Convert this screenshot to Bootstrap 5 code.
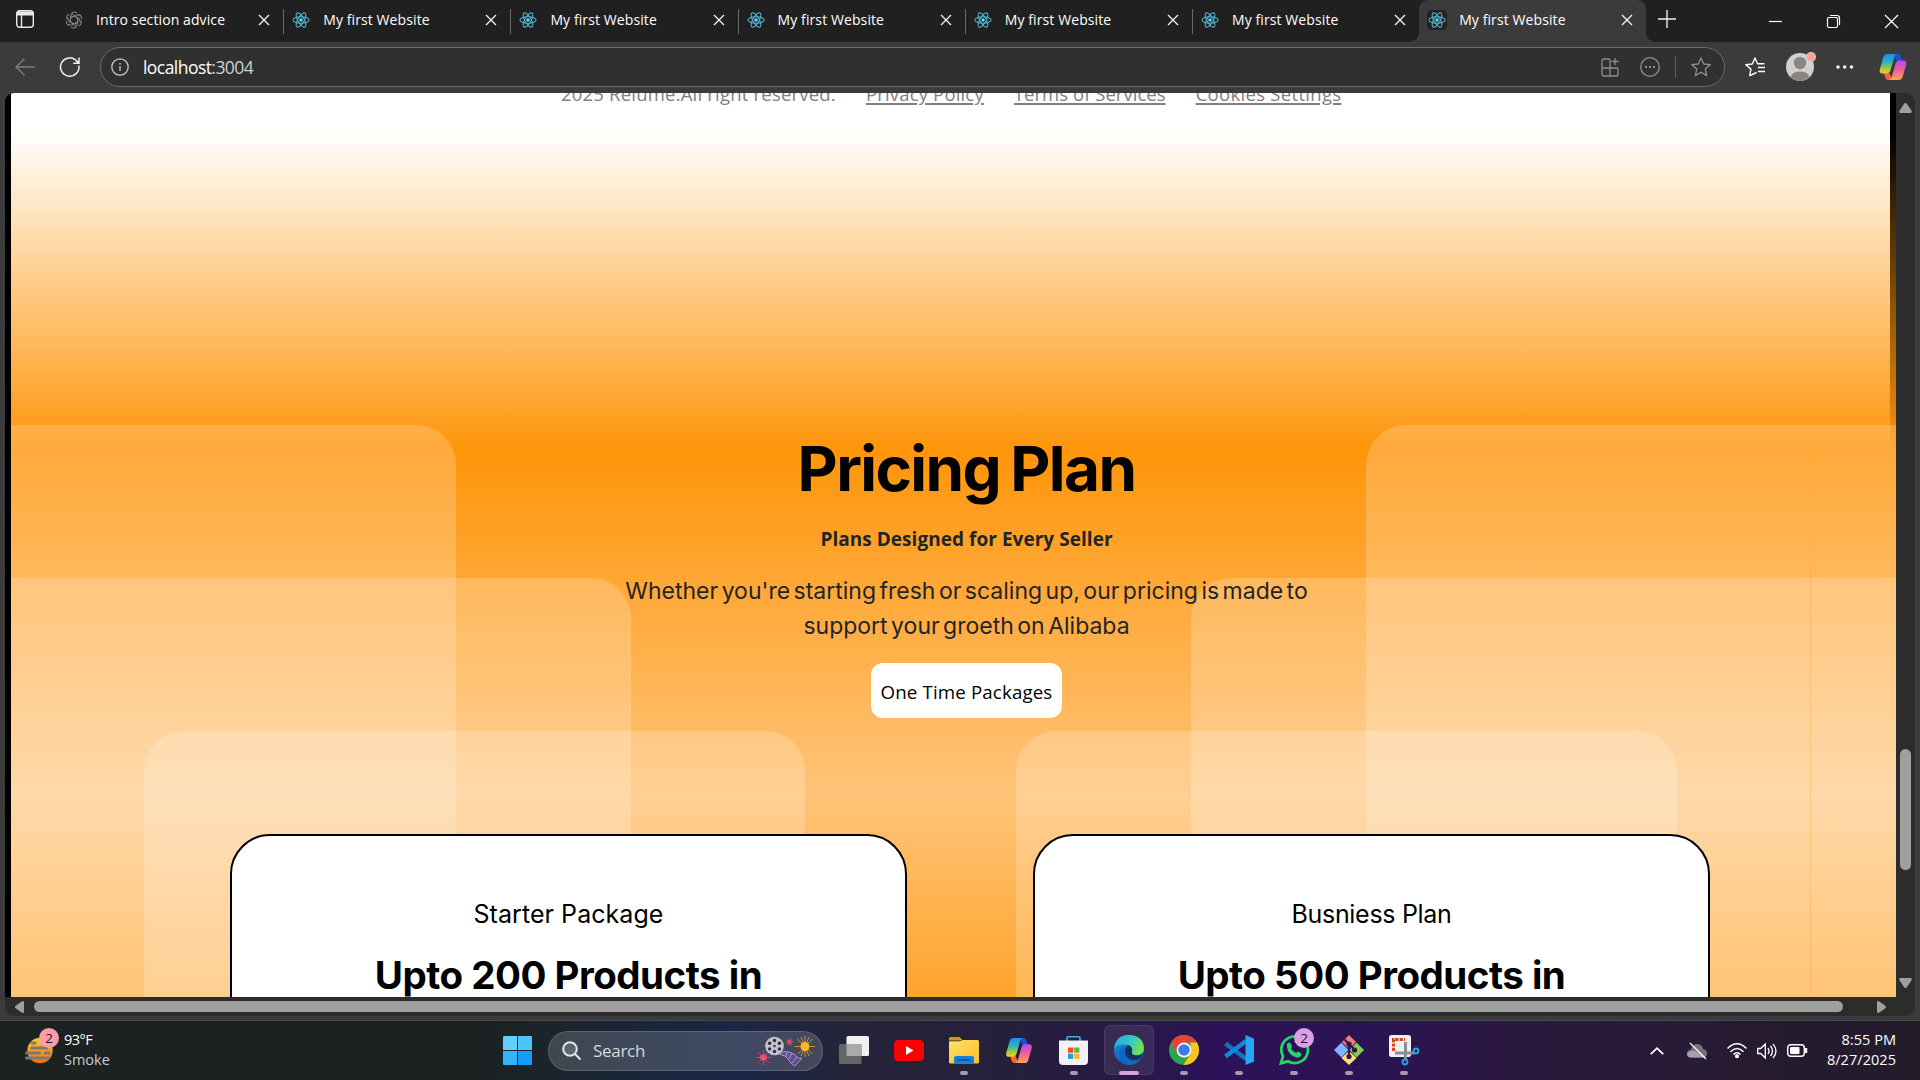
<!DOCTYPE html>
<html lang="en">
<head>
<meta charset="utf-8">
<title>My first Website</title>
<link href="https://cdn.jsdelivr.net/npm/bootstrap@5.3.0/dist/css/bootstrap.min.css" rel="stylesheet">
<style>
  body { width: 1920px; height: 1080px; overflow: hidden; font-family: "Open Sans", "Noto Sans", sans-serif; background: #3b3b3b; }
  svg { display: block; flex: none; overflow: visible; }

  /* tab strip */
  .tabstrip { height: 42px; background: #202020; color: #fff; }
  .tab-tools { width: 56px; padding-left: 16px; }
  .tab { width: 227.2px; padding-left: 9px; padding-right: 13px; font-size: 14px; letter-spacing: .1px; position: relative; height: 42px; padding-bottom: 3px; white-space: nowrap; }
  .tab + .tab::before, .tab:first-of-type::before { content: ""; position: absolute; left: 0; top: 9px; height: 25px; border-left: 1px solid #6a6a6a; }
  .tab .ttl { margin-left: 13px; }
  .tab.active { background: #3b3b3b; border-radius: 9px 9px 0 0; }
  .tab.active::before { display: none; }
  .tab.active::after { content: ""; position: absolute; left: -9px; right: -9px; bottom: 0; height: 9px;
    background: radial-gradient(circle at 0 0, transparent 8.5px, #3b3b3b 9px) left/9px 9px no-repeat, radial-gradient(circle at 100% 0, transparent 8.5px, #3b3b3b 9px) right/9px 9px no-repeat; }
  .fav { width: 18px; height: 18px; border-radius: 3px; }
  .active .fav { background: #222; outline: 1px solid #222; }
  .newtab { margin-left: 12px; }
  .caption-btns { gap: 45px; padding-right: 22px; padding-top: 1px; }

  /* toolbar */
  .toolbar { height: 51px; background: #3b3b3b; padding-left: 15px; padding-right: 13px; padding-bottom: 1px; }
  .omnibox { width: 1625px; height: 40px; border: 1px solid #6b6b6b; border-radius: 20px; background: #303030; margin-left: 20px; padding: 0 13px 0 10px; font-size: 17.5px; }
  .omnibox .url { margin-left: 14px; color: #fff; letter-spacing: -.55px; }
  .omnibox .url span { color: #cfcfcf; }
  .divider { width: 1px; height: 22px; background: #5d5d5d; }

  /* viewport and scrollbars */
  .viewport { height: 928px; padding: 0 5px 5px; border-bottom: 1px solid #464646; }
  .viewbox { width: 1910px; border-radius: 9px; overflow: hidden; background: #2c2c2c; }
  .page { width: 1891px; height: 904px; background: #000; padding-left: 6px; overflow: hidden; }
  .canvas { position: relative; width: 1885px; height: 904px; overflow: hidden; }
  .backdrop { position: absolute; inset: 0; background: linear-gradient(rgba(255,149,10,0) 37px, rgb(255,149,10) 356px, #ffc479 702px, #ffa42b 904px); }
  .whitebase { position: absolute; left: 0; top: 0; bottom: 0; width: 1879px; background: #fff; }
  .pane { position: absolute; width: 661px; height: 700px; border-radius: 40px; background: rgba(255,255,255,.2); }
  .seam { position: absolute; left: 1799px; top: 332px; bottom: 0; width: 1px; background: rgba(255,160,50,.3); }
  .content { position: relative; width: 1911px; margin-top: -14px; }
  .legal { height: 30px; line-height: 30px; padding-left: 550px; gap: 30px; font-size: 18.5px; color: #808080; white-space: nowrap; }
  .legal a { color: inherit; text-underline-offset: 2px; text-decoration-thickness: 1.5px; }
  .l1 { letter-spacing: .2px; }
  .l2 { letter-spacing: .17px; }
  .l3 { letter-spacing: .04px; }
  .l4 { letter-spacing: .3px; }
  .plan-title { font: 700 62px/74px Inter, sans-serif; color: #000; letter-spacing: -1.6px; word-spacing: -3px; margin: 323px 0 19px; }
  .plan-sub { font-weight: 700; font-size: 19px; line-height: 28px; margin: 0 0 21px; letter-spacing: .04px; }
  .plan-text { font: 400 23px/35px Inter, sans-serif; margin: 0 0 19px; letter-spacing: 0; word-spacing: -3px; color: #212529; }
  .plan-btn { width: 191px; height: 55px; border-radius: 12px; background: #fff; color: #000; font-size: 18.7px; padding: 4px 0 0; border: 0; letter-spacing: .15px; }
  .plans { margin: 116px 0 0 219px; gap: 126px; }
  .plan { width: 677px; height: 500px; border: 2px solid #000; border-radius: 40px; background: #fff; color: #000; padding-top: 59px; text-align: center; font-family: Inter, sans-serif; }
  .plan h3 { font-size: 25px; line-height: 38px; font-weight: 400; margin: 0 0 19px; letter-spacing: .06px; }
  .plan + .plan h3 { letter-spacing: -.3px; }
  .plan h2 { font-size: 38.5px; line-height: 46px; font-weight: 700; margin: 0; letter-spacing: -.5px; }
  .vbar { width: 19px; height: 904px; padding: 10px 0 9px; }
  .vthumb { width: 11px; height: 121px; border-radius: 6px; background: #9f9f9f; margin-top: 636px; }
  .hbar { height: 19px; padding: 0 0 0 10px; }
  .hthumb { width: 1809px; height: 11px; border-radius: 6px; background: #9f9f9f; margin-left: 10px; margin-right: 34px; }

  /* taskbar */
  .taskbar { height: 59px; color: #fff; font-size: 14.5px; line-height: 20px;
    background: linear-gradient(90deg, #1c2222 0, #1c2222 480px, #1a2634 600px, #1b2747 740px, #252439 850px, #26203a 980px, #271b43 1110px, #2c1259 1220px, #2b1451 1400px, #2b183d 1520px, #281b34 1700px, #221c2b 1920px); }
  .weather { width: 490px; padding-left: 25px; letter-spacing: -.5px; }
  .temps { margin: -2px 0 0 10px; }
  .temps span { color: #c8cccc; letter-spacing: 0; }
  .searchbox { width: 275px; height: 40px; border-radius: 20px; background: rgba(255,255,255,.16); border: 1px solid rgba(255,255,255,.14); margin: 0 3px; padding: 0 7px 0 13px; font-size: 17px; color: #d5d9dc; letter-spacing: -.3px; }
  .app { width: 55px; height: 59px; position: relative; padding-bottom: 1px; }
  .app.run::after { content: ""; position: absolute; left: 50%; bottom: 5px; width: 8px; height: 4px; margin-left: -4px; border-radius: 2px; background: #a49bb2; }
  .app.on::before { content: ""; position: absolute; inset: 4px 2px 5px 3px; border-radius: 6px; background: rgba(255,255,255,.08); border: 1px solid rgba(255,255,255,.08); }
  .app.on::after { width: 20px; margin-left: -10px; background: #dca0e2; }
  .app svg { position: relative; }
  .count { position: absolute; width: 20px; height: 20px; border-radius: 50%; color: #2a1035; font-size: 13.5px; line-height: 20px; text-align: center; letter-spacing: 0; }
  .count-weather { left: 39px; top: -4px; background: #ff9aa8; }
  .count-chat { left: 28px; top: 7px; background: #dc9fe2; }
  .tray { padding-right: 24px; }
  .clock { text-align: right; letter-spacing: .05px; width: 75px; margin: -2px 0 0 13px; white-space: nowrap; }
</style>
<script src="https://cdn.jsdelivr.net/npm/bootstrap@5.3.0/dist/js/bootstrap.bundle.min.js"></script>
</head>
<body>
<svg width="0" height="0" class="position-absolute">
  <defs>
    <linearGradient id="cA" x1="0" y1="0" x2="0" y2="1"><stop offset="0" stop-color="#1b8ef2"/><stop offset=".4" stop-color="#2ab0c0"/><stop offset=".75" stop-color="#a5cc3c"/><stop offset="1" stop-color="#ffcb22"/></linearGradient>
    <linearGradient id="cB" x1="0" y1="0" x2="0" y2="1"><stop offset="0" stop-color="#b04df0"/><stop offset=".45" stop-color="#ec5aa0"/><stop offset="1" stop-color="#ffa450"/></linearGradient>
    <linearGradient id="fold" x1="0" y1="0" x2="1" y2="1"><stop offset="0" stop-color="#ffdf6b"/><stop offset="1" stop-color="#fdbf2c"/></linearGradient>
    <linearGradient id="eG" x1="0" y1="0" x2="1" y2=".3"><stop offset="0" stop-color="#2aa4e8"/><stop offset=".6" stop-color="#34c7c7"/><stop offset="1" stop-color="#74e04c"/></linearGradient>
    <linearGradient id="eB" x1="0" y1="0" x2=".6" y2="1"><stop offset="0" stop-color="#1d9be0"/><stop offset="1" stop-color="#0c4fa5"/></linearGradient>
    <linearGradient id="sun" x1="0" y1="0" x2="0" y2="1"><stop offset="0" stop-color="#ffc928"/><stop offset="1" stop-color="#f07018"/></linearGradient>
    <symbol id="react" viewBox="0 0 20 20"><g fill="none" stroke="#53b9d4" stroke-width="1.15"><ellipse cx="10" cy="10" rx="9" ry="3.5"/><ellipse cx="10" cy="10" rx="9" ry="3.5" transform="rotate(60 10 10)"/><ellipse cx="10" cy="10" rx="9" ry="3.5" transform="rotate(120 10 10)"/></g><circle cx="10" cy="10" r="1.9" fill="#61dafb"/></symbol>
    <symbol id="copilot" viewBox="0 0 28 28"><path d="M14 1h5q2 0 2.600 2l1.800 5.500h-5.500z" fill="#1c50d6"/><path d="M14 27H9q-2 0-2.600-2l-1.800-5.500h5.500z" fill="#f4643c"/><path d="M8.500 1H18q-2 .5-2.700 3L11.500 17q-1 3.500-4 3.500H3.500Q0 20.500 .8 16.500L4.400 4Q5.300 1 8.500 1z" fill="url(#cA)"/><path d="M19.500 27H10q2-.5 2.700-3L16.500 11q1-3.500 4-3.500h4q3.500 0 2.700 4L23.600 24q-.9 3-4.100 3z" fill="url(#cB)"/></symbol>
    <symbol id="xmark" viewBox="0 0 12 12"><path d="M1 1l10 10M11 1L1 11" stroke="#f2f2f2" stroke-width="1.3"/></symbol>
  </defs>
</svg>

<header class="tabstrip d-flex align-items-center">
  <div class="tab-tools pb-1"><svg width="18" height="18" viewBox="0 0 18 18" fill="none" stroke="#e8e8e8" stroke-width="1.4"><rect x=".7" y=".7" width="16.600" height="16.600" rx="3"/><path d="M1 2.800h16M1 4.200h16" stroke-width="2.500"/><path d="M5.500 5v12"/></svg></div>
  <div class="tab d-flex align-items-center"><svg class="fav" viewBox="0 0 20 20" fill="none" stroke="#858585" stroke-width="1.200"><g id="petal"><path d="M10 5.500L14 7.800V13q0 3-3 4.300"/><path d="M7 2.700Q10-.3 13.300 2.200"/></g><use href="#petal" transform="rotate(60 10 10)"/><use href="#petal" transform="rotate(120 10 10)"/><use href="#petal" transform="rotate(180 10 10)"/><use href="#petal" transform="rotate(240 10 10)"/><use href="#petal" transform="rotate(300 10 10)"/></svg><span class="ttl">Intro section advice</span><svg class="ms-auto" width="12" height="12"><use href="#xmark"/></svg></div>
  <div class="tab d-flex align-items-center"><svg class="fav"><use href="#react"/></svg><span class="ttl">My first Website</span><svg class="ms-auto" width="12" height="12"><use href="#xmark"/></svg></div>
  <div class="tab d-flex align-items-center"><svg class="fav"><use href="#react"/></svg><span class="ttl">My first Website</span><svg class="ms-auto" width="12" height="12"><use href="#xmark"/></svg></div>
  <div class="tab d-flex align-items-center"><svg class="fav"><use href="#react"/></svg><span class="ttl">My first Website</span><svg class="ms-auto" width="12" height="12"><use href="#xmark"/></svg></div>
  <div class="tab d-flex align-items-center"><svg class="fav"><use href="#react"/></svg><span class="ttl">My first Website</span><svg class="ms-auto" width="12" height="12"><use href="#xmark"/></svg></div>
  <div class="tab d-flex align-items-center"><svg class="fav"><use href="#react"/></svg><span class="ttl">My first Website</span><svg class="ms-auto" width="12" height="12"><use href="#xmark"/></svg></div>
  <div class="tab active d-flex align-items-center"><svg class="fav"><use href="#react"/></svg><span class="ttl">My first Website</span><svg class="ms-auto" width="12" height="12"><use href="#xmark"/></svg></div>
  <svg class="newtab mb-1" width="18" height="18" viewBox="0 0 18 18" stroke="#eee" stroke-width="1.400"><path d="M9 0v18M0 9h18"/></svg>
  <div class="caption-btns d-flex align-items-center ms-auto">
    <svg width="13" height="13" stroke="#fff" stroke-width="1.200"><path d="M0 6.500h13"/></svg>
    <svg width="13" height="13" fill="none" stroke="#fff" stroke-width="1.200"><rect x=".5" y="2.500" width="10" height="10" rx="1.500"/><path d="M3 .5h7q2.500 0 2.500 2.500v7"/></svg>
    <svg width="13" height="13" stroke="#fff" stroke-width="1.200"><path d="M0 0l13 13M13 0L0 13"/></svg>
  </div>
</header>

<nav class="toolbar d-flex align-items-center">
  <svg width="20" height="18" viewBox="0 0 20 18" fill="none" stroke="#7d7d7d" stroke-width="1.400"><path d="M20 9H1M9.500 .8L1 9l8.500 8.200"/></svg>
  <svg style="margin-left:25px" width="20" height="20" viewBox="0 0 20 20" fill="none" stroke="#f0f0f0" stroke-width="1.500"><path d="M18.800 8.500A9.200 9.200 0 1 1 15.500 2.900l3 3M19 .5V6.200H13.200"/></svg>
  <div class="omnibox d-flex align-items-center">
    <svg width="18" height="18" viewBox="0 0 18 18" fill="none" stroke="#c9c9c9" stroke-width="1.300"><circle cx="9" cy="9" r="8.200"/><path d="M9 8v5M9 5v1.500"/></svg>
    <span class="url">localhost<span>:3004</span></span>
    <div class="ms-auto d-flex align-items-center" style="gap:15px">
      <svg style="margin-right:6px" width="18" height="19" viewBox="0 0 18 19" fill="none" stroke="#8f8f8f" stroke-width="1.300"><path d="M8 1H3Q1 1 1 3v13q0 2 2 2h12q2 0 2-2v-5q0-1-1-1H1M9 18V2Q9 1 8 1M14 0v7M10.500 3.500h7"/></svg>
      <svg width="20" height="20" viewBox="0 0 20 20" fill="none" stroke="#8f8f8f" stroke-width="1.300"><circle cx="10" cy="10" r="9.300"/><path d="M5 10h2M9 10h2M13 10h2" stroke-width="2"/></svg>
      <span class="divider"></span>
      <svg width="20" height="20" viewBox="0 0 20 20" fill="none" stroke="#8f8f8f" stroke-width="1.300" stroke-linejoin="round"><path d="M10 1l2.700 6 6.500.7-4.900 4.400 1.400 6.500L10 15.300l-5.700 3.300 1.400-6.500L.8 7.700 7.300 7z"/></svg>
    </div>
  </div>
  <svg style="margin-left:20px" width="20" height="20" viewBox="0 0 20 20" fill="none" stroke="#fff" stroke-width="1.400" stroke-linejoin="round"><path d="M11.500 15.500L4.800 18.600l1.100-6.500L.8 7.700 7.300 7 10 1l2.500 5.800h7M13 10.500h7M13 14.500h7"/></svg>
  <svg style="margin-left:21px" width="30" height="30" viewBox="0 0 30 30"><circle cx="14" cy="15" r="14" fill="#d2d0cc"/><circle cx="14" cy="11" r="6.200" fill="#8a8782"/><path d="M4.500 25Q6 19.500 14 19.500T23.500 25Q19 29 14 29T4.500 25z" fill="#8a8782"/><circle cx="25" cy="5" r="5" fill="#d2d0cc"/><circle cx="25" cy="5" r="4" fill="#ff9f9a"/></svg>
  <svg style="margin-left:20px" width="18" height="4" fill="#f2f2f2"><circle cx="2" cy="2" r="1.800"/><circle cx="8.700" cy="2" r="1.800"/><circle cx="15.500" cy="2" r="1.800"/></svg>
  <svg class="ms-auto" width="28" height="28"><use href="#copilot"/></svg>
</nav>

<main class="viewport">
  <div class="viewbox">
    <div class="d-flex">
      <div class="page">
        <div class="canvas">
          <div class="whitebase"></div>
          <div class="backdrop"></div>
          <div class="pane" style="left:-216px;top:332px"></div>
          <div class="pane" style="left:-41px;top:485px"></div>
          <div class="pane" style="left:133px;top:638px"></div>
          <div class="pane" style="left:1355px;top:332px"></div>
          <div class="pane" style="left:1180px;top:485px;width:900px"></div>
          <div class="pane" style="left:1005px;top:638px"></div>
          <div class="seam"></div>
          <div class="content">
            <div class="legal d-flex"><span class="l1">2025 Relume.All right reserved.</span><a class="l2" href="#">Privacy Policy</a><a class="l3" href="#">Terms of Services</a><a class="l4" href="#">Cookies Settings</a></div>
            <section class="text-center">
              <h1 class="plan-title">Pricing Plan</h1>
              <p class="plan-sub">Plans Designed for Every Seller</p>
              <p class="plan-text">Whether you're starting fresh or scaling up, our pricing is made to<br>support your groeth on Alibaba</p>
              <button class="plan-btn d-block mx-auto">One Time Packages</button>
            </section>
            <section class="plans d-flex">
              <article class="plan"><h3>Starter Package</h3><h2>Upto 200 Products in</h2></article>
              <article class="plan"><h3>Busniess Plan</h3><h2>Upto 500 Products in</h2></article>
            </section>
          </div>
        </div>
      </div>
      <div class="vbar d-flex flex-column align-items-center">
        <svg width="13" height="10" fill="#9f9f9f"><path d="M6.500 0Q7.500 0 8 1l4.700 7q.5 2-1 2H1.300q-1.500 0-1-2L5 1q.5-1 1.500-1z"/></svg>
        <div class="vthumb"></div>
        <svg class="mt-auto" width="13" height="10" fill="#9f9f9f"><path d="M6.500 10Q7.500 10 8 9l4.700-7q.5-2-1-2H1.300Q-.2 0 .3 2L5 9q.5 1 1.500 1z"/></svg>
      </div>
    </div>
    <div class="hbar d-flex align-items-center">
      <svg width="9" height="12" fill="#9f9f9f"><path d="M0 6Q0 5 1 4.500L7 .3Q9-.5 9 1.300v9.400q0 1.800-2 1L1 7.500Q0 7 0 6z"/></svg>
      <div class="hthumb"></div>
      <svg width="9" height="12" fill="#9f9f9f"><path d="M9 6Q9 5 8 4.500L2 .3Q0-.5 0 1.300v9.400q0 1.800 2 1L8 7.500Q9 7 9 6z"/></svg>
    </div>
  </div>
</main>

<footer class="taskbar d-flex align-items-center">
  <div class="weather d-flex align-items-center position-relative">
    <svg width="29" height="29" viewBox="0 0 29 29"><circle cx="15" cy="14.500" r="12.700" fill="url(#sun)"/><path d="M7 7h3M7 12h15M1.500 17h13M20 17h4M1.500 22h22" stroke="#7b7974" stroke-width="3" stroke-linecap="round"/></svg>
    <span class="count count-weather">2</span>
    <div class="temps">93°F<br><span>Smoke</span></div>
  </div>
  <div class="app d-flex align-items-center justify-content-center"><svg width="29" height="29"><path fill="#62d0fb" d="M1 0h13v14H0V1q0-1 1-1z"/><path fill="#4cc6fa" d="M15 0h13q1 0 1 1v13H15z"/><path fill="#35b5f8" d="M0 15h14v14H1q-1 0-1-1z"/><path fill="#149cf6" d="M15 15h14v13q0 1-1 1H15z"/></svg></div>
  <div class="searchbox d-flex align-items-center">
    <svg width="19" height="19" fill="none" stroke="#e4e4e4" stroke-width="2"><circle cx="8" cy="8" r="6.800" fill="#5a666c"/><path d="M13 13l5 5" stroke-linecap="round"/></svg>
    <span style="margin-left:12px">Search</span>
    <svg class="ms-auto" width="59" height="30" viewBox="0 0 59 30"><g stroke="#f0405f" stroke-width=".8"><path d="M7.500 14v15M0 21.500h15M2 16l11 11M13 16L2 27M33.500 2v8M29.500 6h8M31 3l5 6M36 3l-5 6"/></g><circle cx="7.500" cy="21.500" r="3.300" fill="#f0506c"/><circle cx="33.500" cy="6" r="2.300" fill="#f0405f"/><g stroke="#e8a52c" stroke-width=".8"><path d="M49 0v21M38.500 10.500H59M41.500 3l15 15M56.500 3l-15 15M45 1l8 19M53 1l-8 19"/></g><circle cx="49" cy="10.500" r="4.500" fill="#f8b92c"/><path d="M23 18q4-4 10-2 7 2 8 5 2 2 5 1l-7 8q-4-1-6-6-3-5-10-6z" fill="#5f4f8c" stroke="#a793d4"/><path d="M31 16l-1 5M36 17l-3 6M41 21l-5 6" stroke="#a793d4"/><circle cx="18.500" cy="10" r="9.300" fill="#c6c1ce"/><g fill="#2f2b3c"><circle cx="18.500" cy="4.500" r="1.700"/><circle cx="18.500" cy="15.500" r="1.700"/><circle cx="13.600" cy="7.300" r="1.700"/><circle cx="23.400" cy="7.300" r="1.700"/><circle cx="13.600" cy="12.900" r="1.700"/><circle cx="23.400" cy="12.900" r="1.700"/><circle cx="18.500" cy="10" r="1.200"/></g></svg>
  </div>
  <div class="app d-flex align-items-center justify-content-center"><svg width="30" height="28"><rect x="7.500" width="22.500" height="20" rx="1.500" fill="#f0f0f0"/><rect y="8" width="22.500" height="20" rx="1.500" fill="#666"/><path d="M7.500 8h15v12h-15z" fill="#aaa"/></svg></div>
  <div class="app d-flex align-items-center justify-content-center"><svg width="30" height="21"><rect width="30" height="21" rx="4.500" fill="#f00"/><path d="M12 6l7.500 4.500L12 15z" fill="#fff"/></svg></div>
  <div class="app run d-flex align-items-center justify-content-center"><svg width="30" height="27"><path d="M0 1.500Q0 0 1.500 0h9L14 3.500H0z" fill="#d59a14"/><path d="M0 5q0-.8 1-.8h10L14 3h14.500Q30 3 30 4.500V25q0 1.500-1.500 1.500h-27Q0 26.500 0 25z" fill="url(#fold)"/><path d="M5 26.500V21q0-2 2-2h16q2 0 2 2v5.500z" fill="#1480d8"/><path d="M8.500 23h13" stroke="#0b4f94" stroke-width="1.500"/></svg></div>
  <div class="app d-flex align-items-center justify-content-center"><svg width="28" height="27"><use href="#copilot"/></svg></div>
  <div class="app run d-flex align-items-center justify-content-center"><svg width="29" height="29"><path d="M8 5V2q0-1.300 1.300-1.300h10.400Q21 .7 21 2v3" fill="none" stroke="#32b3f2" stroke-width="1.600"/><path d="M0 4.500h29V25q0 4-4 4H4q-4 0-4-4z" fill="#f2f2f4"/><path d="M9 11.500h5.200v5.200H9z" fill="#f1511b"/><path d="M15.200 11.500h5.200v5.200h-5.200z" fill="#65b32e"/><path d="M9 17.700h5.200v5.200H9z" fill="#1aa0ee"/><path d="M15.200 17.700h5.200v5.200h-5.200z" fill="#fbb918"/></svg></div>
  <div class="app run on d-flex align-items-center justify-content-center"><svg width="30" height="30" viewBox="0 0 30 30"><circle cx="15" cy="15" r="15" fill="url(#eB)"/><path d="M0 13Q2 0 15 0 29 .5 30 13q0 7-7 7.500-6 0-5-4 1-6-6-7Q4 9 0 13z" fill="url(#eG)"/><path d="M18 16.500q-1 4 5 4 3.500 0 5.500-2.500Q27 25 19.500 25 11 24 11 16q0-4 3.500-5.800 4.500 1.800 3.500 6.300z" fill="#15305e"/><path d="M11 14q-3 11 8.500 12 4 0 7-2-4 6-11.500 6Q5 28 5 19q.5-6 6-7z" fill="#1068c0"/></svg></div>
  <div class="app run d-flex align-items-center justify-content-center"><svg width="30" height="30" viewBox="0 0 30 30"><circle cx="15" cy="15" r="15" fill="#2fa24c"/><path d="M15 15L2 7.500A15 15 0 0 1 28 7.500H15z" fill="#ea4335"/><path d="M28 7.500A15 15 0 0 1 14.500 30L21.500 18.500 21.500 7.500z" fill="#fcc31e"/><path d="M2 7.500L9 19 15 7.500z" fill="#ea4335"/><circle cx="15" cy="15" r="7.400" fill="#fff"/><circle cx="15" cy="15" r="5.800" fill="#3b7ded"/></svg></div>
  <div class="app run d-flex align-items-center justify-content-center"><svg width="30" height="30" viewBox="0 0 30 30"><path d="M1.500 8.500L22 24" stroke="#0f74c4" stroke-width="4.500"/><path d="M1.500 21.500L22 6" stroke="#1587d8" stroke-width="4.500"/><path d="M21.500 0L30 3.500v23L21.500 30z" fill="#27a5f2"/></svg></div>
  <div class="app run d-flex align-items-center justify-content-center"><svg width="30" height="30" viewBox="0 0 30 30"><path d="M2 28.200l2-7A13.300 13.300 0 1 1 9 26.300z" fill="none" stroke="#25d366" stroke-width="2.800"/><path d="M8 9q2-3 4 0l1 2.500q0 1-1 2 2 3.500 5 4.500l2-1.500q3 1 3.500 2.500-.5 4-5 3.500Q9 20 8 12z" fill="#25d366"/></svg><span class="count count-chat">2</span></div>
  <div class="app run d-flex align-items-center justify-content-center"><svg width="30" height="30" viewBox="0 0 30 30"><path d="M15 0l7 7-7 7-7-7z" fill="#f5797b"/><path d="M7.500 7.500l7 7.500-7 7.500L0 15z" fill="#80b3ff"/><path d="M22.500 7.500L30 15l-7.500 7.500-7-7.500z" fill="#80cc55"/><path d="M15 16l7.500 7L15 30l-7.500-7z" fill="#ffe080"/><path d="M10.500 4.500L15 9v13M15 9l6.500 6.500" stroke="#2f1746" stroke-width="2" fill="none"/><g fill="#2f1746"><circle cx="15" cy="9" r="2.600"/><circle cx="15" cy="21.500" r="2.600"/><circle cx="20.500" cy="15" r="2.600"/></g></svg></div>
  <div class="app run d-flex align-items-center justify-content-center"><svg width="30" height="30" viewBox="0 0 30 30"><rect width="22" height="22" rx="2.500" fill="#f0f0f2"/><path d="M4.500 16V4.500H16" fill="none" stroke="#dc4412" stroke-width="3" stroke-dasharray="3.200 1.200"/><path d="M16.500 7v18M6 18h19" stroke="#8b8e92" stroke-width="3"/><g fill="none" stroke="#2a9fe8" stroke-width="2"><circle cx="27" cy="16" r="2.400"/><circle cx="16" cy="27" r="2.400"/></g></svg></div>

  <div class="tray d-flex align-items-center ms-auto">
    <svg width="14" height="8" fill="none" stroke="#fff" stroke-width="1.800"><path d="M.8 7.200L7 1.200l6.200 6"/></svg>
    <svg style="margin-left:23px" width="20" height="16"><path d="M4 14.500q-4 0-4-4 0-3.500 4-4Q6 1 10 1q5 0 6 5 4 .5 4 4.500t-4 4z" fill="#77717f"/><path d="M0 10.500q4-4 9-2l9 5q-1 1-2 1H4q-4 0-4-4z" fill="#a5a0ab"/><path d="M3 0l16 16" stroke="#fff" stroke-width="1.300"/></svg>
    <svg style="margin-left:20px" width="20" height="15" fill="none" stroke="#fff" stroke-width="1.500"><path d="M.5 5.500Q10-4 19.500 5.500M3.500 8.800Q10 2 16.500 8.800M6.500 11.500Q10 8 13.500 11.500"/><circle cx="10" cy="13.200" r="1.300" fill="#fff"/></svg>
    <svg style="margin-left:10px" width="20" height="16" fill="none" stroke="#fff" stroke-width="1.300"><path d="M.7 5.500h3L8.300 1v14L3.700 10.500h-3zM11 5q2 3 0 6M13.500 3q4 5 0 10M16 .800q6 7.200 0 14.400"/></svg>
    <svg style="margin-left:10px" width="21" height="13" fill="none" stroke="#fff" stroke-width="1.400"><rect x=".7" y=".7" width="16.600" height="11.600" rx="3"/><rect x="3" y="3" width="9.500" height="7" rx="1" fill="#fff" stroke="none"/><path d="M19 4v5" stroke-width="2.500"/></svg>
    <div class="clock">8:55 PM<br>8/27/2025</div>
  </div>
</footer>
</body>
</html>
